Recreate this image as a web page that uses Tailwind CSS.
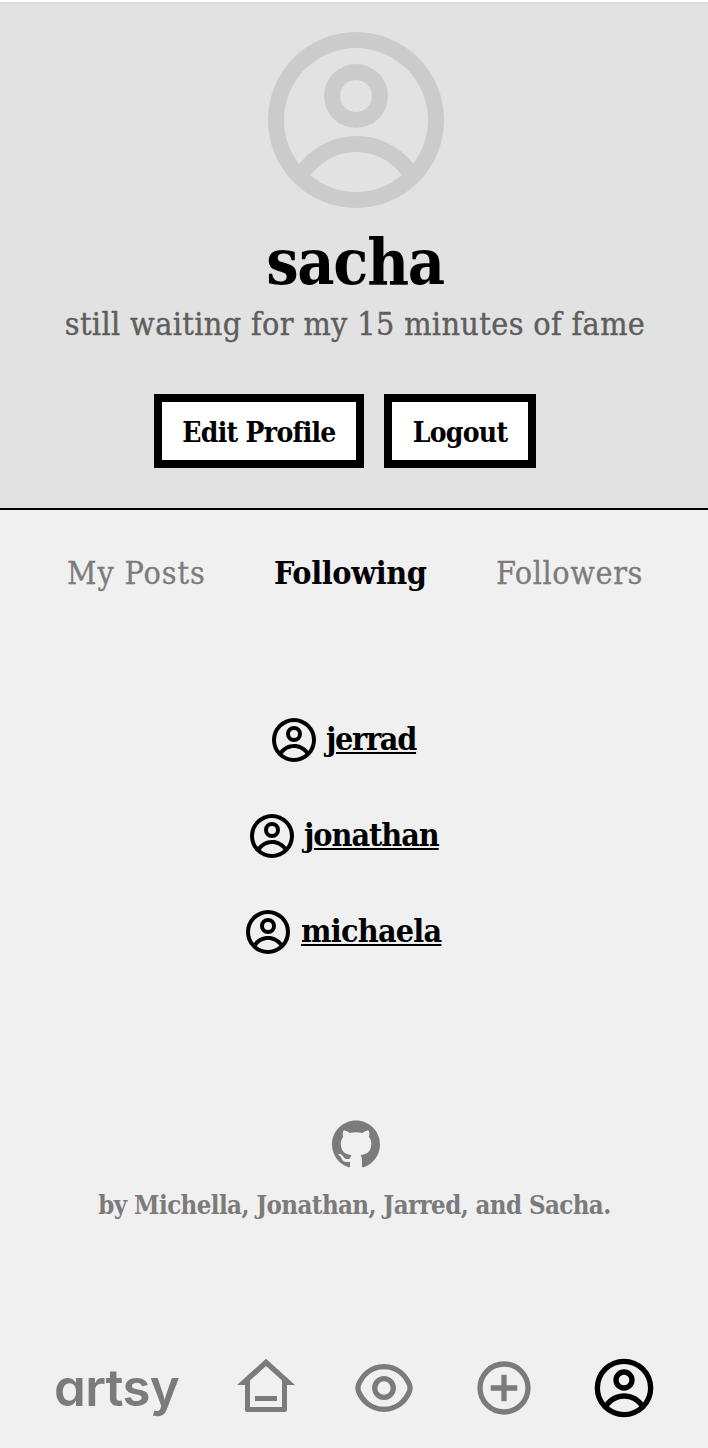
<!DOCTYPE html>
<html lang="en"><head><meta charset="utf-8"><title>artsy</title>
<script src="https://cdn.jsdelivr.net/npm/@tailwindcss/browser@4"></script></head>
<body class="font-['Roboto_Slab','DejaVu_Serif_Condensed','DejaVu_Serif',serif] bg-[#f0f0f0] text-black">
<svg class="hidden"><symbol id="user" viewBox="0 0 24 24"><path fill-rule="evenodd" d="M16 9a4 4 0 1 1-8 0a4 4 0 0 1 8 0ZM14 9a2 2 0 1 1-4 0a2 2 0 0 1 4 0Z"/><path fill-rule="evenodd" d="M12 1a11 11 0 1 0 0 22a11 11 0 0 0 0-22ZM3 12C3 14.09 3.713 16.014 4.908 17.542C6.552 15.389 9.146 14 12.065 14C14.945 14 17.509 15.353 19.157 17.458C20.313 15.944 21 14.052 21 12A9 9 0 0 0 3 12ZM12 21C9.839 21 7.877 20.238 6.345 18.97C7.6 17.17 9.695 16 12.065 16C14.405 16 16.478 17.14 17.737 18.903C16.197 20.21 14.191 21 12 21Z"/></symbol></svg>
<div class="h-[1448px] w-[708px] overflow-hidden flex flex-col">
<header class="h-[510px] shrink-0 border-b-2 border-black bg-[#e2e2e2] flex flex-col items-center">
<div class="h-[2px] w-full bg-white"></div><div class="h-[2px] w-full bg-[#dadadf]"></div>
<svg class="mt-5 ml-1 size-48 shrink-0 fill-[#cbcbcb]"><use href="#user"/></svg>
<h1 class="mt-[6px] ml-[2px] h-[80px] leading-[80px] text-[64px] font-bold tracking-[-1.3px]">sacha</h1>
<p class="ml-[2px] h-[44px] leading-[44px] text-[32px] text-[#5e5e5e] whitespace-nowrap tracking-[0.38px] [-webkit-text-stroke:0.4px_#5e5e5e]">still waiting for my 15 minutes of fame</p>
<div class="mt-[48px] mr-[18px] flex gap-5 text-[28px] font-bold whitespace-nowrap">
<button class="w-[210px] h-[74px] border-8 bg-white pt-[3px] flex items-center justify-center tracking-[-0.7px]">Edit Profile</button>
<button class="w-[152px] h-[74px] border-8 bg-white pt-[3px] flex items-center justify-center tracking-[-0.7px]">Logout</button></div>
</header>
<nav class="mt-[41px] h-[44px] shrink-0 leading-[44px] pl-[67px] flex text-[32px] text-[#7c7c7c] whitespace-nowrap">
<a class="w-[207px] tracking-[0.9px] [-webkit-text-stroke:0.3px_#7c7c7c]">My Posts</a><a class="w-[222px] font-bold text-black tracking-[-0.35px]">Following</a><a class="tracking-[0.6px] [-webkit-text-stroke:0.3px_#7c7c7c]">Followers</a></nav>
<main class="mt-[121px] shrink-0 flex flex-col gap-12 text-[32px] leading-[48px] font-bold">
<a class="h-12 flex gap-2 pl-[270px]"><svg class="size-12"><use href="#user"/></svg><span class="-mt-px underline decoration-2 underline-offset-[2px] tracking-[-1.3px]">jerrad</span></a>
<a class="h-12 flex gap-2 pl-[248px]"><svg class="size-12"><use href="#user"/></svg><span class="-mt-px underline decoration-2 underline-offset-[2px] tracking-[-1.05px]">jonathan</span></a>
<a class="h-12 flex gap-[9px] pl-[244px]"><svg class="size-12"><use href="#user"/></svg><span class="-mt-px underline decoration-2 underline-offset-[2px] tracking-[-0.75px]">michaela</span></a>
</main>
<footer class="mt-[164px] shrink-0 flex flex-col items-center text-[#7b7b7b]">
<svg class="ml-1 size-12" viewBox="0 0 16 16" fill="currentColor"><path d="M8 .2C3.58.2 0 3.78 0 8.2c0 3.54 2.29 6.53 5.47 7.59.4.07.55-.17.55-.38 0-.19-.01-.82-.01-1.49-2.01.37-2.53-.49-2.69-.94-.09-.23-.48-.94-.82-1.13-.28-.15-.68-.52-.01-.53.63-.01 1.08.58 1.23.82.72 1.21 1.87.87 2.33.66.07-.52.28-.87.51-1.07-1.78-.2-3.64-.89-3.64-3.95 0-.87.31-1.59.82-2.15-.08-.2-.36-1.02.08-2.12 0 0 .67-.21 2.2.82.64-.18 1.32-.27 2-.27s1.36.09 2 .27c1.53-1.04 2.2-.82 2.2-.82.44 1.1.16 1.92.08 2.12.51.56.82 1.27.82 2.15 0 3.07-1.87 3.75-3.65 3.95.29.25.54.73.54 1.48 0 1.07-.01 1.93-.01 2.2 0 .21.15.46.55.38A8.01 8.01 0 0 0 16 8.2c0-4.42-3.58-8-8-8Z"/></svg>
<p class="mt-[19px] ml-[1px] h-9 leading-9 text-[25.6px] font-bold whitespace-nowrap tracking-[-0.59px]">by Michella, Jonathan, Jarred, and Sacha.</p>
</footer>
<nav class="mt-[133px] shrink-0 h-16 pl-[54px] flex text-[#7b7b7b]">
<div class="w-[180px]"><span class="block font-['Inter',sans-serif] font-semibold text-[51px] leading-[64px] [font-feature-settings:'cv11'] tracking-[-0.7px]">artsy</span></div>
<svg class="size-16" viewBox="0 0 64 64" fill="currentColor"><path fill-rule="evenodd" d="M32 2.8L61 29H53V54a2 2 0 0 1-2 2H13a2 2 0 0 1-2-2V29H3ZM32 10L16 24.5V51H48V24.5Z"/><path d="M21 40H43V45H21Z"/></svg>
<svg class="ml-[54px] size-16" viewBox="0 0 64 64" fill="none" stroke="currentColor" stroke-width="5.3"><path d="M32 10.7C45 10.7 54 19.5 57.6 29Q58.6 32 57.6 35C54 44.5 45 53.3 32 53.3S10 44.5 6.4 35Q5.4 32 6.4 29C10 19.5 19 10.7 32 10.7Z"/><circle cx="32" cy="32" r="9.3"/></svg>
<svg class="ml-[56px] size-16" viewBox="0 0 64 64" fill="none" stroke="currentColor" stroke-width="5.3"><circle cx="32" cy="32" r="24"/><path d="M32 18.7V45.3M18.7 32H45.3"/></svg>
<svg class="ml-[56px] size-16 fill-black"><use href="#user"/></svg>
</nav>
</div>
</body></html>
